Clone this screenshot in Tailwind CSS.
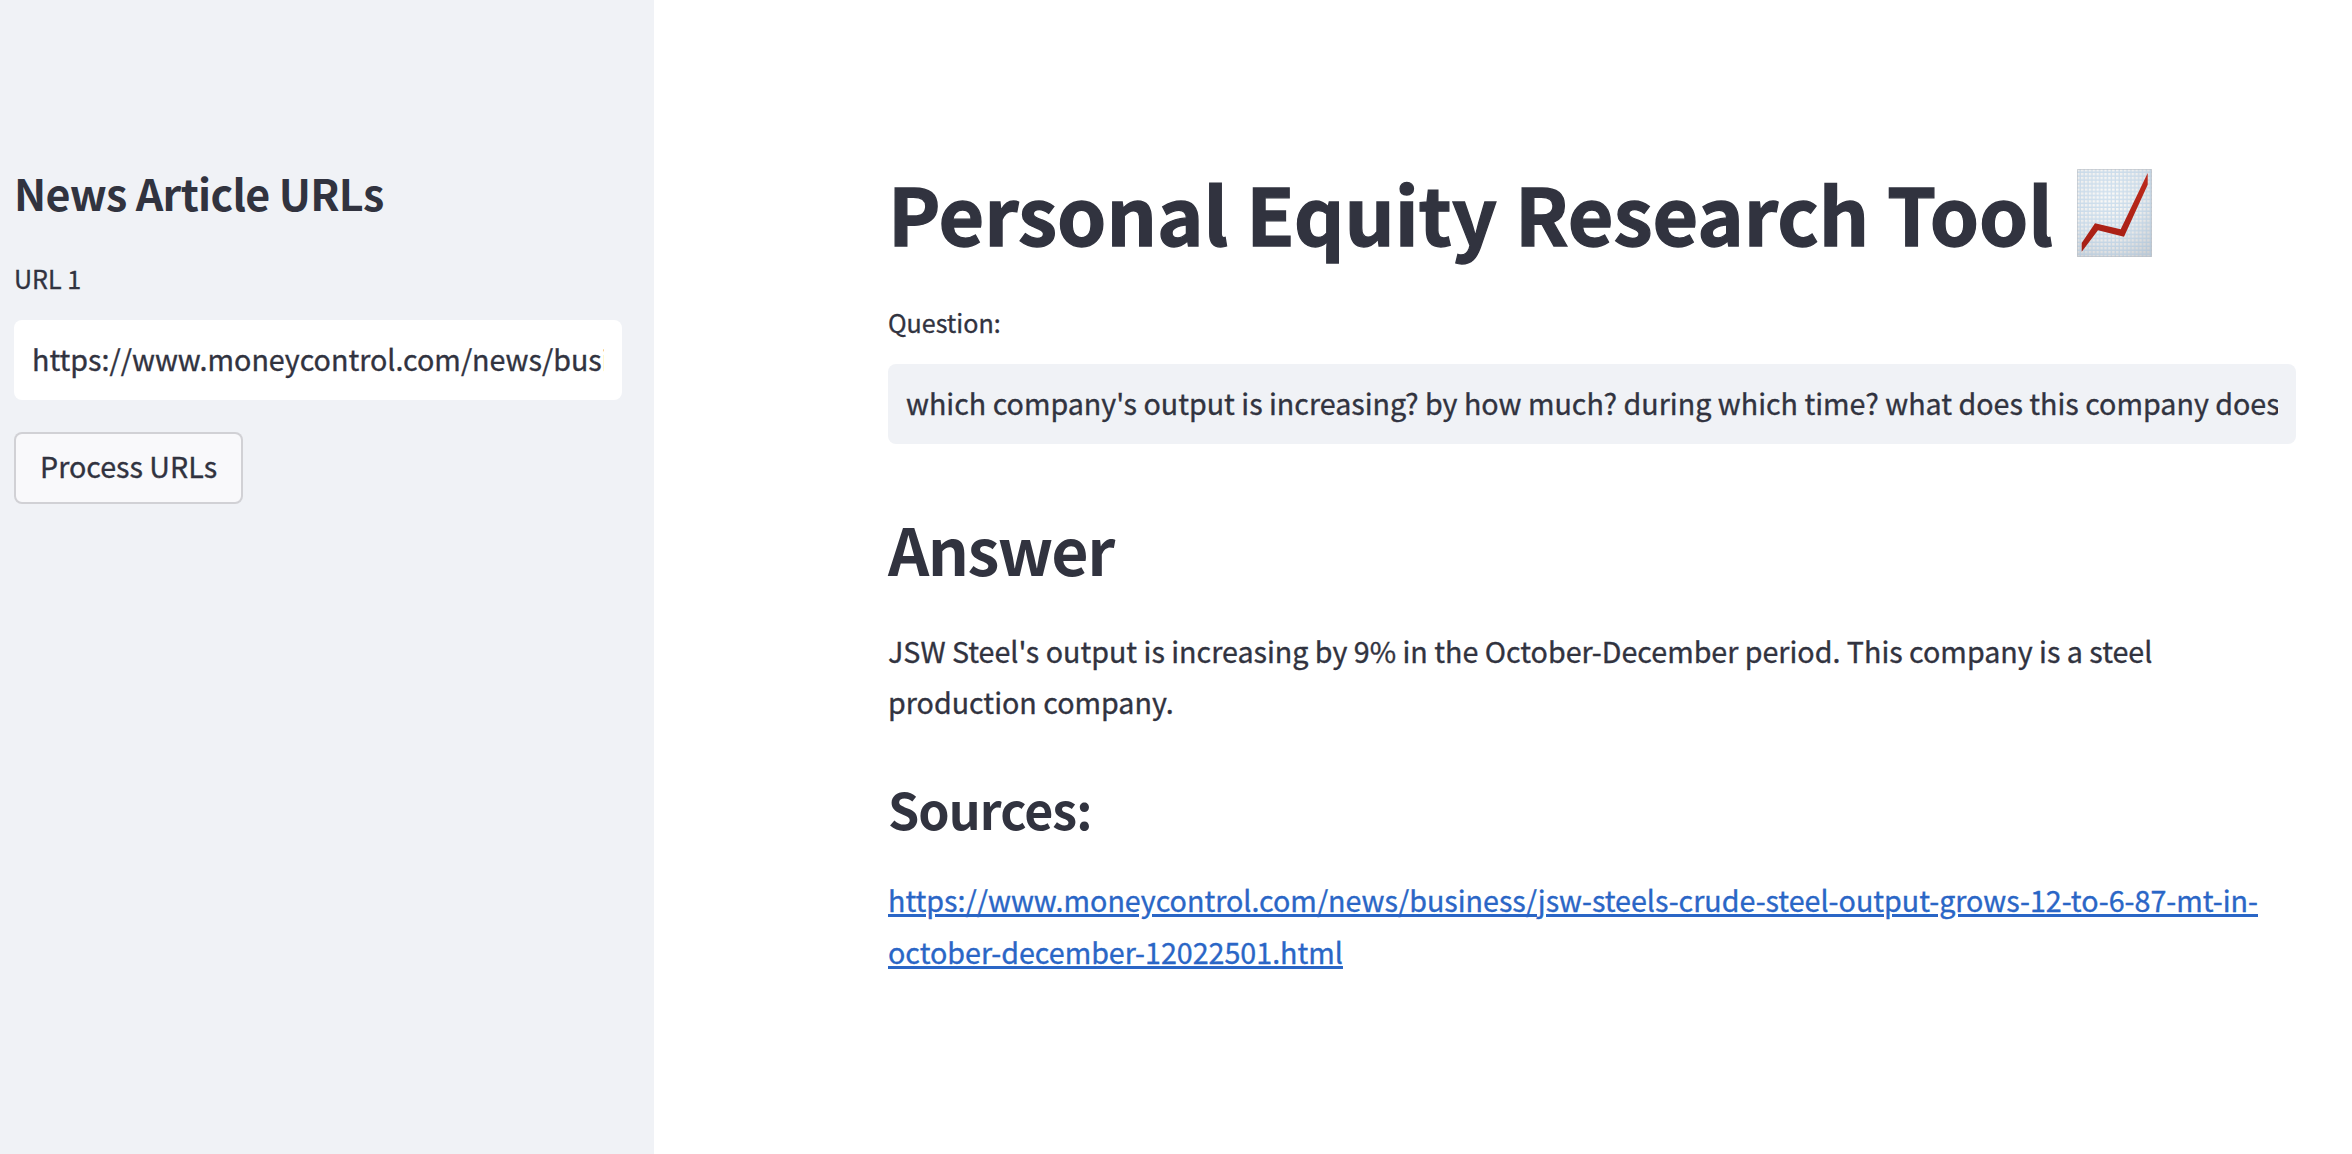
<!DOCTYPE html>
<html lang="en">
<head>
<meta charset="utf-8">
<title>Personal Equity Research Tool</title>
<script src="https://cdn.jsdelivr.net/npm/@tailwindcss/browser@4"></script>
</head>
<body class="flex h-[1154px] w-[2352px] overflow-hidden bg-white font-['Noto_Sans_CJK_SC',sans-serif] text-[28.65px] text-[#31333f] [-webkit-text-stroke:0.35px]">
<aside class="flex w-[654px] shrink-0 flex-col items-start bg-[#f0f2f6] pt-[163px] pr-8 pl-[14px]">
<h2 class="text-[43px] leading-[58px] font-semibold tracking-[-0.016em] whitespace-nowrap [-webkit-text-stroke:0]">News Article URLs</h2>
<label class="mt-9 text-[25.07px] leading-[42px]">URL 1</label>
<div class="mt-[21px] flex h-20 w-full items-center rounded-lg bg-white px-[18px] pb-[2px]"><div class="w-full overflow-hidden whitespace-nowrap">https://www.moneycontrol.com/news/business</div></div>
<button class="mt-8 flex h-18 items-center rounded-lg border-2 border-[#31333f]/20 bg-[#f9f9fb] px-6 pb-[3px]">Process URLs</button>
</aside>
<main class="flex w-[1642px] flex-col pt-[159px] pl-[234px]">
<h1 class="flex items-start text-[78.8px] leading-[106px] font-bold whitespace-nowrap [-webkit-text-stroke:1.3px]">Personal Equity Research Tool
<svg class="mt-[10px] ml-6 h-[88px] w-[75px]" viewBox="0 0 75 88" role="img" aria-label="Chart increasing">
<defs>
<radialGradient id="paper" cx="0.4" cy="0.3" r="0.85"><stop offset="0" stop-color="#fbfaf8"/><stop offset="0.55" stop-color="#eeeeee"/><stop offset="1" stop-color="#d0d1d3"/></radialGradient>
<linearGradient id="line" x1="0" y1="0" x2="0" y2="1"><stop offset="0" stop-color="#bd2a1c"/><stop offset="1" stop-color="#a51e14"/></linearGradient>
<pattern id="grid" width="3.9" height="3.9" patternUnits="userSpaceOnUse"><path d="M0 3.2H3.9M3.2 0V3.9" stroke="#94bbdf" stroke-opacity="0.42" stroke-width="1.3"/></pattern>
</defs>
<rect width="75" height="88" fill="url(#paper)"/>
<rect width="75" height="88" fill="url(#grid)"/>
<path d="M.5 .5H74.5V87.5H.5Z" fill="none" stroke="#b9bec4" stroke-opacity="0.6"/>
<path d="M4.7 74 18 54.3 43.7 60.3 70.7 4V15.7L47 67.7 21 61.3 4.7 82.7Z" fill="url(#line)"/>
</svg></h1>
<label class="mt-9 text-[25.07px] leading-[42px]">Question:</label>
<div class="mt-[21px] flex h-20 items-center rounded-lg bg-[#f0f2f6] px-[18px] pb-[2px]"><div class="w-full overflow-hidden whitespace-nowrap">which company's output is increasing? by how much? during which time? what does this company does</div></div>
<h2 class="mt-[61px] text-[64.4px] leading-[86px] font-semibold tracking-[-0.024em] [-webkit-text-stroke:0]">Answer</h2>
<p class="mt-[34px] leading-[51.2px]">JSW Steel's output is increasing by 9% in the October-December period. This company is a steel<br>production company.</p>
<h3 class="mt-[48px] text-[50.1px] leading-[67px] font-semibold tracking-[-0.018em] [-webkit-text-stroke:0]">Sources:</h3>
<p class="mt-[31.5px] leading-[52px]"><a class="text-[#2a66c6] underline decoration-3 underline-offset-2">https://www.moneycontrol.com/news/business/jsw-steels-crude-steel-output-grows-12-to-6-87-mt-in-<br>october-december-12022501.html</a></p>
</main>
</body>
</html>
